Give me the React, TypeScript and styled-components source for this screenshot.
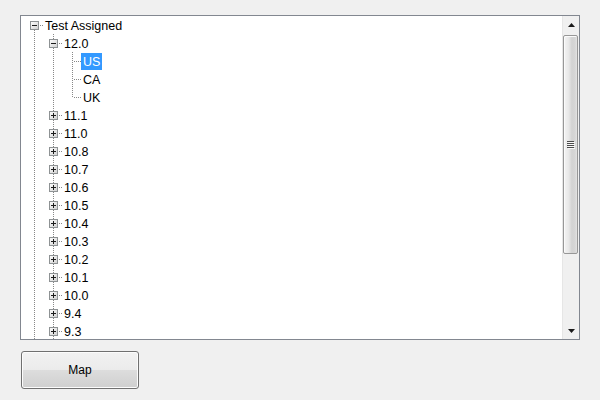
import React, { useId } from "react";
import styled, { createGlobalStyle } from "styled-components";

type TreeNode = {
  label: string;
  children?: TreeNode[];
  expanded?: boolean;
  selected?: boolean;
};

type Row = {
  node: TreeNode;
  level: number;
  guides: boolean[];
  hasPrev: boolean;
  hasNext: boolean;
};

const versions = ["11.1", "11.0", "10.8", "10.7", "10.6", "10.5", "10.4", "10.3", "10.2", "10.1", "10.0", "9.4", "9.3", "9.2", "9.1"];

const data: TreeNode[] = [
  {
    label: "Test Assigned",
    expanded: true,
    children: [
      {
        label: "12.0",
        expanded: true,
        children: [{ label: "US", selected: true }, { label: "CA" }, { label: "UK" }],
      },
      ...versions.map((v) => ({ label: v, children: [{ label: "US" }] })),
    ],
  },
  { label: "Test Unassigned", children: [{ label: "12.0" }] },
];

function flatten(nodes: TreeNode[], level: number, guides: boolean[], out: Row[]): Row[] {
  nodes.forEach((node, i) => {
    const hasNext = i < nodes.length - 1;
    out.push({ node, level, guides, hasPrev: i > 0 || level > 0, hasNext });
    if (node.expanded && node.children) flatten(node.children, level + 1, [...guides, hasNext], out);
  });
  return out;
}

const rows = flatten(data, 0, [], []);

const COL = 19;
const ROW_H = 18;
const MID = 9;
const LINE = "#888888";

const GlobalStyle = createGlobalStyle`
  html, body { margin: 0; padding: 0; background: #f0f0f0; }
  body { font-family: "Liberation Sans", Arial, sans-serif; font-size: 12px; color: #000; }
`;

const Page = styled.div`
  display: flex;
  flex-direction: column;
  align-items: flex-start;
  padding: 15px 0 0 20px;
  width: 600px;
  height: 400px;
  box-sizing: border-box;
`;

const TreeFrame = styled.div`
  width: 560px;
  height: 325px;
  box-sizing: border-box;
  border: 1px solid #828790;
  background: #fff;
  display: flex;
`;

const TreeViewport = styled.div`
  flex: 1;
  overflow: hidden;
  padding-left: 3px;
  display: flex;
  flex-direction: column;
`;

const TreeRow = styled.div`
  display: flex;
  height: ${ROW_H}px;
  flex-shrink: 0;
`;

const GuideSvg = styled.svg`
  display: block;
  flex-shrink: 0;
  shape-rendering: crispEdges;
`;

const Label = styled.span<{ $selected?: boolean }>`
  display: flex;
  align-items: center;
  height: 17px;
  margin-top: 1px;
  padding: 0 2px;
  white-space: nowrap;
  font-size: 12.5px;
  background: ${(p) => (p.$selected ? "#3399ff" : "transparent")};
  color: ${(p) => (p.$selected ? "#fff" : "#000")};
`;

const ScrollBar = styled.div`
  width: 17px;
  flex-shrink: 0;
  display: flex;
  flex-direction: column;
  background: #f0f0f0;
  border-left: 1px solid #e6e6e6;
  box-sizing: border-box;
`;

const ArrowButton = styled.div`
  height: 17px;
  flex-shrink: 0;
  display: flex;
  align-items: center;
  justify-content: center;
`;

const Track = styled.div`
  flex: 1;
  display: flex;
  flex-direction: column;
  padding: 2px 1px 0 0;
`;

const Thumb = styled.div`
  height: 219px;
  box-sizing: border-box;
  border: 1px solid #979797;
  border-radius: 2px;
  background: linear-gradient(to right, #f4f4f4 0%, #e8e8e8 35%, #d3d3d3 60%, #d6d6d6 85%, #e4e4e4 100%);
  box-shadow: inset 1px 1px 0 #fbfbfb;
  display: flex;
  align-items: center;
  justify-content: center;
`;

const MapButton = styled.button`
  margin: 11px 0 0 1px;
  width: 118px;
  height: 38px;
  box-sizing: border-box;
  border: 1px solid #707070;
  border-radius: 3px;
  background: linear-gradient(to bottom, #f2f2f2 0%, #ebebeb 50%, #dddddd 50%, #cfcfcf 100%);
  box-shadow: inset 0 0 0 1px #fcfcfc;
  display: flex;
  align-items: center;
  justify-content: center;
  padding: 0;
`;

const ButtonText = styled.span`
  font-family: "Liberation Sans", Arial, sans-serif;
  font-size: 12px;
  line-height: 14px;
  color: #000;
`;

function Guides({ row }: { row: Row }) {
  const id = useId();
  const w = COL * (row.level + 1);
  const cx = COL * row.level + 10;
  const hasKids = !!row.node.children && row.node.children.length > 0;
  const dash = "1 1";
  return (
    <GuideSvg width={w} height={ROW_H}>
      <defs>
        <linearGradient id={id} x1="0" y1="0" x2="1" y2="1">
          <stop offset="0" stopColor="#ffffff" />
          <stop offset="1" stopColor="#cfcfcf" />
        </linearGradient>
      </defs>
      {row.guides.map((g, k) =>
        g ? (
          <line key={k} x1={COL * k + 10.5} y1={0} x2={COL * k + 10.5} y2={ROW_H} stroke={LINE} strokeDasharray={dash} />
        ) : null
      )}
      {row.hasPrev && <line x1={cx + 0.5} y1={0} x2={cx + 0.5} y2={MID} stroke={LINE} strokeDasharray={dash} />}
      {row.hasNext && <line x1={cx + 0.5} y1={MID + 1} x2={cx + 0.5} y2={ROW_H} stroke={LINE} strokeDasharray={dash} />}
      <line x1={hasKids ? cx + 6 : cx + 2} y1={MID + 0.5} x2={w} y2={MID + 0.5} stroke={LINE} strokeDasharray={dash} />
      {hasKids && (
        <g>
          <rect x={cx - 3.5} y={MID - 3.5} width={8} height={8} fill={`url(#${id})`} stroke="#8e9294" />
          <rect x={cx - 2} y={MID} width={5} height={1} fill="#1b1b1b" />
          {!row.node.expanded && <rect x={cx} y={MID - 2} width={1} height={5} fill="#1b1b1b" />}
        </g>
      )}
    </GuideSvg>
  );
}

function Triangle({ up }: { up?: boolean }) {
  return (
    <svg width="7" height="4" viewBox="0 0 7 4" style={{ display: "block" }}>
      <path d={up ? "M3.5 0 L7 4 L0 4 Z" : "M0 0 L7 0 L3.5 4 Z"} fill="#1a1a1a" />
    </svg>
  );
}

function Grip() {
  return (
    <svg width="8" height="8" viewBox="0 0 8 8" style={{ display: "block" }} shapeRendering="crispEdges">
      {[0, 2, 4, 6].map((y) => (
        <g key={y}>
          <rect x="0" y={y} width="7" height="1" fill="#4c4c4c" />
          <rect x="1" y={y + 1} width="7" height="1" fill="#fafafa" />
        </g>
      ))}
    </svg>
  );
}

export default function App() {
  return (
    <>
      <GlobalStyle />
      <Page>
        <TreeFrame>
          <TreeViewport>
            {rows.map((row, i) => (
              <TreeRow key={i}>
                <Guides row={row} />
                <Label $selected={row.node.selected}>{row.node.label}</Label>
              </TreeRow>
            ))}
          </TreeViewport>
          <ScrollBar>
            <ArrowButton>
              <Triangle up />
            </ArrowButton>
            <Track>
              <Thumb>
                <Grip />
              </Thumb>
            </Track>
            <ArrowButton>
              <Triangle />
            </ArrowButton>
          </ScrollBar>
        </TreeFrame>
        <MapButton>
          <ButtonText>Map</ButtonText>
        </MapButton>
      </Page>
    </>
  );
}
